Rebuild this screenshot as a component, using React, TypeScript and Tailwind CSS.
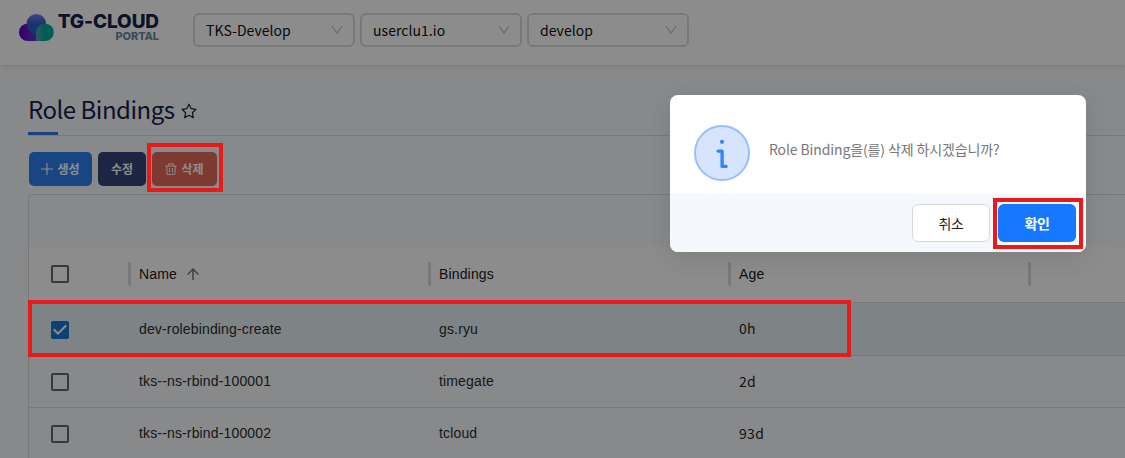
import type { ReactNode } from 'react';

const SANS = "font-['Noto_Sans_CJK_KR',sans-serif]";
const ARIAL = "font-['Liberation_Sans',Arial,sans-serif]";

function Logo() {
  return (
    <div className="flex h-full w-[193px] shrink-0 items-start pl-[19px]">
      <svg className="mt-[13px] h-7 w-[35px] shrink-0" viewBox="0 0 35 28">
        <defs>
          <linearGradient id="cloudLeft" x1="0" x2="1">
            <stop offset="0" stopColor="#5a00c8" />
            <stop offset="0.35" stopColor="#6a1cc4" />
            <stop offset="1" stopColor="#2a78b4" />
          </linearGradient>
          <linearGradient id="cloudTop" x1="0" x2="0" y1="0" y2="1">
            <stop offset="0" stopColor="#7a80ea" />
            <stop offset="0.55" stopColor="#2a5cc8" />
            <stop offset="1" stopColor="#1d6fcf" />
          </linearGradient>
          <linearGradient id="cloudRight" x1="0" x2="1">
            <stop offset="0" stopColor="#5a9fbe" />
            <stop offset="0.5" stopColor="#00a890" />
            <stop offset="1" stopColor="#00b0a0" />
          </linearGradient>
        </defs>
        <rect x="0" y="10.5" width="27" height="17.5" rx="8.7" fill="url(#cloudLeft)" />
        <circle cx="17.3" cy="10.6" r="9.7" fill="url(#cloudTop)" />
        <path d="M17.2 28V19.2a8.8 8.8 0 0 1 8.8-8.8a8.8 8.8 0 0 1 0 17.6z" fill="url(#cloudRight)" />
      </svg>
      <div className="ml-[4px] flex w-[101px] flex-col items-end font-['Inter',sans-serif] whitespace-nowrap">
        <span className="mt-[13px] text-[19px] leading-[17px] font-extrabold tracking-[-0.1px] text-[#16224e]">TG-CLOUD</span>
        <span className="text-[11px] leading-[12px] font-extrabold tracking-[-0.1px] text-[#7088a4]">PORTAL</span>
      </div>
    </div>
  );
}

function HeaderSelect({ value }: { value: string }) {
  return (
    <div className="flex h-[34px] w-[162px] items-center justify-between rounded-md border-2 border-[#dadada] pr-[10px] pl-[11px]">
      <span className="text-[14px] leading-5 tracking-[0.05px] text-[#111]">{value}</span>
      <svg className="h-2.5 w-3" viewBox="0 0 12 10" fill="none" stroke="#bdbdbd" strokeWidth="1.1">
        <path d="M1 1l5 7 5-7" />
      </svg>
    </div>
  );
}

function Checkbox({ checked = false }: { checked?: boolean }) {
  return checked ? (
    <span className="flex size-[18px] items-center justify-center rounded-[2px] bg-[#1976d2]">
      <svg className="size-[18px]" viewBox="3 3 18 18" fill="#fff">
        <path d="M10 17l-5-5 1.41-1.41L10 14.17l7.59-7.59L19 8z" />
      </svg>
    </span>
  ) : (
    <span className="block size-[18px] rounded-[2px] border-2 border-[#666]" />
  );
}

function Separator() {
  return <span className="mb-px h-6 w-[3px] shrink-0 rounded-sm bg-[#dadada]" />;
}

function HeaderCell({ children }: { children?: ReactNode }) {
  return (
    <div className="flex w-[300px] shrink-0 items-center text-[#1a1a1a]">
      <Separator />
      <span className="ml-2 flex items-center">{children}</span>
    </div>
  );
}

const rows = [
  { name: 'dev-rolebinding-create', binding: 'gs.ryu', age: '0h', checked: true },
  { name: 'tks--ns-rbind-100001', binding: 'timegate', age: '2d', checked: false },
  { name: 'tks--ns-rbind-100002', binding: 'tcloud', age: '93d', checked: false },
];

function BindingsTable() {
  return (
    <div className={`mt-2 h-[300px] w-[1140px] rounded-t border border-[#dcdddf] text-[14px] tracking-[0.15px] ${ARIAL}`}>
      <div className="h-[52px]" />
      <div className="flex h-[56px] items-center border-b border-[#dcdcdc] bg-white">
        <div className="w-[99px] shrink-0 pb-[2px] pl-[22px]">
          <Checkbox />
        </div>
        <HeaderCell>
          Name
          <svg className="mb-[2px] ml-[7px] size-[18px]" viewBox="0 0 24 24" fill="#757575">
            <path d="M4 12l1.41 1.41L11 7.83V20h2V7.83l5.58 5.59L20 12l-8-8-8 8z" />
          </svg>
        </HeaderCell>
        <HeaderCell>Bindings</HeaderCell>
        <HeaderCell>Age</HeaderCell>
        <Separator />
      </div>
      {rows.map((r) => (
        <div
          key={r.name}
          className={
            r.checked
              ? 'flex h-[53px] items-center border-b border-[#dcdddf] bg-[#e6eef3]'
              : 'flex h-[52px] items-center border-b border-[#dcdddf]'
          }
        >
          <div className={r.checked ? 'w-[110px] shrink-0 pt-[2px] pl-[22px]' : 'w-[110px] shrink-0 pl-[22px]'}>
            <Checkbox checked={r.checked} />
          </div>
          <span className="w-[300px] shrink-0 text-[#2c2c2d]">{r.name}</span>
          <span className="w-[300px] shrink-0 text-[#2c2c2d]">{r.binding}</span>
          <span className={`mb-[2px] text-[14px] leading-5 tracking-[0.3px] text-[#1f1f20] ${SANS}`}>{r.age}</span>
        </div>
      ))}
    </div>
  );
}

const actionButton = 'flex h-[34px] items-center justify-center rounded-[5px] text-[12px] font-bold text-white';

function ConfirmDialog() {
  return (
    <div className="absolute top-[95px] left-[670px] flex h-[157px] w-[416px] flex-col overflow-hidden rounded-lg bg-white shadow-[0_6px_24px_rgba(0,0,0,0.1)]">
      <div className="flex h-[99px] shrink-0 items-center pt-[17px] pl-6">
        <svg className="size-14" viewBox="0 0 56 56">
          <circle cx="28" cy="28" r="27" fill="#d6e5fd" stroke="#96bffc" strokeWidth="2" />
          <circle cx="28" cy="16.8" r="2.1" fill="#3385fa" />
          <path d="M24.2 26.1h3.9v15.3h4" fill="none" stroke="#3385fa" strokeWidth="3.4" strokeLinecap="round" strokeLinejoin="round" />
        </svg>
        <span className="mb-[9px] ml-[19px] text-[14px] leading-5 tracking-[-0.12px] text-[#777]">Role Binding을(를) 삭제 하시겠습니까?</span>
      </div>
      <div className="flex flex-1 items-center justify-end gap-2 bg-[#f4f8fd] pr-[10px]">
        <button className="mb-px h-[38px] w-[78px] rounded-md border border-[#d9d9d9] bg-white pt-px text-[14px] tracking-[-0.4px] text-[#1f1f1f]">취소</button>
        <button className="mb-px h-[38px] w-[78px] rounded-md bg-[#1677ff] pt-px text-[14px] font-bold tracking-[-0.4px] text-white">확인</button>
      </div>
    </div>
  );
}

export default function App() {
  return (
    <div className={`relative h-[458px] w-[1125px] overflow-hidden bg-[#f8f9fb] ${SANS}`}>
      <header className="flex h-[65px] bg-white shadow-[0_1px_6px_rgba(0,0,0,0.12)]">
        <Logo />
        <div className="flex items-start gap-[5px] pt-[13px]">
          <HeaderSelect value="TKS-Develop" />
          <HeaderSelect value="userclu1.io" />
          <HeaderSelect value="develop" />
        </div>
      </header>

      <main className="pl-7">
        <div className="flex h-[71px] border-b border-[#dcdddf]">
          <div className="flex h-full items-center pt-[17px]">
            <h1 className="text-[24px] leading-8 font-normal tracking-[-0.5px] text-[#16224a]">Role Bindings</h1>
            <svg className="mt-1 ml-[7px] size-4" viewBox="0 0 16 16" fill="none" stroke="#222" strokeWidth="1.2" strokeLinejoin="round">
              <path d="M8 1.2l2.1 4.4 4.8.7-3.5 3.4.9 4.9L8 12.3l-4.3 2.3.9-4.9L1.1 6.3l4.8-.7z" />
            </svg>
          </div>
        </div>
        <div className="relative -mt-1 h-[3px] w-[30px] bg-[#2c7be5]" />
        <div className="mt-[17px] flex gap-1.5 pl-px">
          <button className={`${actionButton} w-[63px] gap-1 bg-[#2f80ed]`}>
            <svg className="size-3" viewBox="0 0 12 12" stroke="#fff" strokeWidth="1.1">
              <path d="M6 0v12M0 6h12" />
            </svg>
            생성
          </button>
          <button className={`${actionButton} w-12 bg-[#34457a]`}>수정</button>
          <button className={`${actionButton} w-[65px] gap-1 bg-[#e66a58]`}>
            <svg className="size-3" viewBox="0 0 12 12" fill="none" stroke="#fff" strokeWidth="1">
              <path d="M.5 3h11M3.7 3V.8h4.6V3M1.7 3l.5 8.4h7.6l.5-8.4M4.6 5v4.4M7.4 5v4.4" />
            </svg>
            삭제
          </button>
        </div>
        <BindingsTable />
      </main>

      <div className="absolute inset-0 bg-black/45" />
      <ConfirmDialog />
      <div className="absolute top-[143px] left-[147px] h-[49px] w-[76px] border-4 border-[#e81b1b]" />
      <div className="absolute top-[300px] left-[28px] h-[57px] w-[823px] border-4 border-[#e81b1b]" />
      <div className="absolute top-[198px] left-[993px] h-[51px] w-[90px] border-4 border-[#e81b1b]" />
    </div>
  );
}
